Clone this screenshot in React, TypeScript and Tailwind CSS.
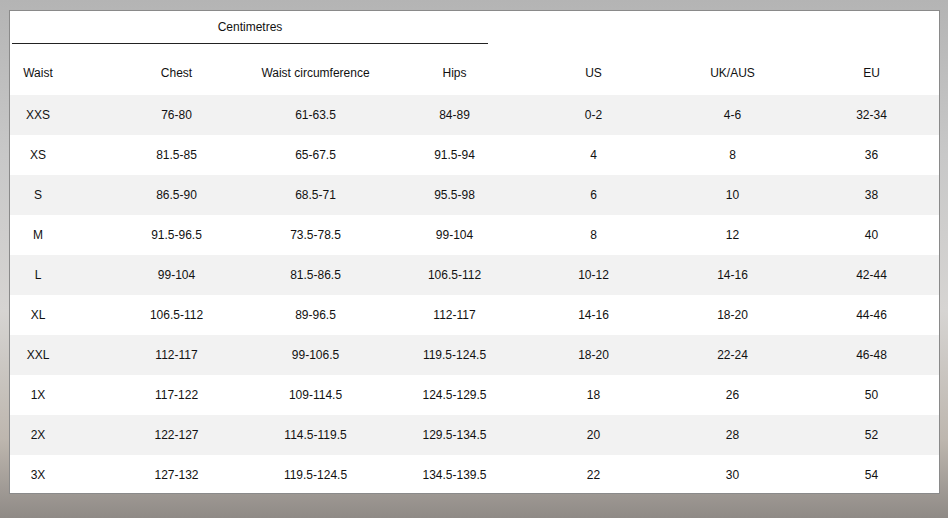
const headers = ["Waist", "Chest", "Waist circumference", "Hips", "US", "UK/AUS", "EU"];
const rows = [
  ["XXS", "76-80", "61-63.5", "84-89", "0-2", "4-6", "32-34"],
  ["XS", "81.5-85", "65-67.5", "91.5-94", "4", "8", "36"],
  ["S", "86.5-90", "68.5-71", "95.5-98", "6", "10", "38"],
  ["M", "91.5-96.5", "73.5-78.5", "99-104", "8", "12", "40"],
  ["L", "99-104", "81.5-86.5", "106.5-112", "10-12", "14-16", "42-44"],
  ["XL", "106.5-112", "89-96.5", "112-117", "14-16", "18-20", "44-46"],
  ["XXL", "112-117", "99-106.5", "119.5-124.5", "18-20", "22-24", "46-48"],
  ["1X", "117-122", "109-114.5", "124.5-129.5", "18", "26", "50"],
  ["2X", "122-127", "114.5-119.5", "129.5-134.5", "20", "28", "52"],
  ["3X", "127-132", "119.5-124.5", "134.5-139.5", "22", "30", "54"],
];

function Row({ cells, className }: { cells: string[]; className: string }) {
  return (
    <div className={`grid grid-cols-[97px_repeat(6,139px)] ${className}`}>
      {cells.map((c, i) => (
        <div key={i} className={i === 0 ? "w-[56px] text-center" : "text-center"}>
          {c}
        </div>
      ))}
    </div>
  );
}

export default function App() {
  return (
    <div className="w-[948px] h-[518px] overflow-hidden bg-[linear-gradient(180deg,#b4b4b4_0%,#c8c8c8_30%,#d6d4d2_60%,#bdb6ae_85%,#8f8a86_100%)] pt-[10px] pl-[9px] font-[Arial,Liberation_Sans,sans-serif] text-[12px] text-[#111]">
      <div className="w-[931px] h-[484px] bg-white border border-[#8a8a8a] overflow-hidden">
        <div className="ml-[2px] w-[476px] h-[33px] border-b border-[#222] flex items-center justify-center">
          Centimetres
        </div>
        <Row cells={headers} className="h-[51px] items-end pb-[13px]" />
        {rows.map((r, i) => (
          <Row key={i} cells={r} className={`h-[40px] items-center ${i % 2 === 0 ? "bg-[#f2f2f2]" : "bg-white"}`} />
        ))}
      </div>
    </div>
  );
}
